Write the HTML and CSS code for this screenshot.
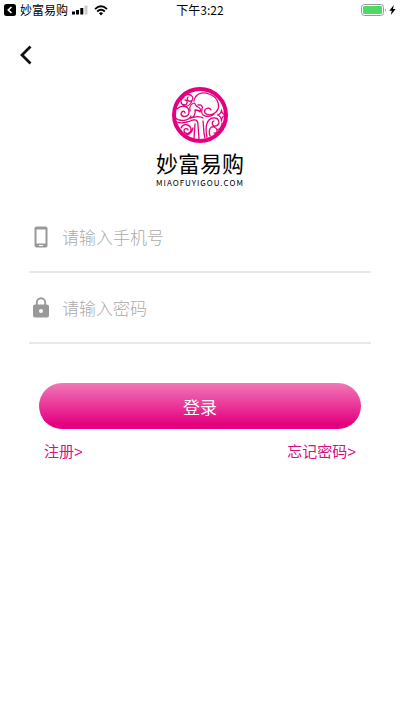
FILE: index.html
```html
<!DOCTYPE html>
<html lang="zh-CN">

<head>
    <meta charset="utf-8">
    <meta name="viewport" content="width=device-width, initial-scale=1">
    <title>妙富易购</title>
    <link rel="stylesheet" href="styles.css">
</head>

<body>
    <!-- 状态栏 -->
    <div class="status">
        <div class="status-left">
            <svg width="12" height="12" viewBox="0 0 12 12">
                <rect width="12" height="12" rx="2.5" fill="#000" />
                <path d="M7.5 3 4.3 6l3.2 3" fill="none" stroke="#fff" stroke-width="1.6" />
            </svg>
            <span>妙富易购</span>
            <svg class="signal" width="16" height="10" viewBox="0 0 16 10">
                <path d="M0 6.500h3V9.500H0zM4 5h3v4.500H4zM8.300 3h3v6.500h-3z" fill="#000" />
                <path d="M12.500 0.500h3v9h-3z" fill="#ccc" />
            </svg>
            <svg class="wifi" width="14" height="11" viewBox="0 0 14 11">
                <path d="M1 4.100Q7-1.500 13 4.100M3.200 6.500Q7 3 10.800 6.500" fill="none" stroke="#000" stroke-width="1.900" />
                <path d="M4.900 8.200Q7 6.300 9.100 8.200L7 10.500z" fill="#000" />
            </svg>
        </div>
        <div class="status-time">下午3:22</div>
        <div class="status-right">
            <svg width="26" height="12" viewBox="0 0 26 12">
                <rect x=".5" y=".5" width="22" height="11" rx="3" fill="#fff" stroke="#999" />
                <rect x="2" y="2" width="19" height="8" rx="1.500" fill="#4cd964" />
                <path d="M24 4q1.800 2 0 4z" fill="#999" />
            </svg>
            <svg width="7" height="10" viewBox="0 0 7 10">
                <path d="M4.800 0 .3 5.700h2.500L1.800 10l4.900-6H4z" fill="#000" />
            </svg>
        </div>
    </div>

    <button class="back" type="button" aria-label="返回">
        <svg width="14" height="20" viewBox="0 0 14 20">
            <path d="M11.500 1.500 3 10l8.500 8.500" fill="none" stroke="#111" stroke-width="2.800" />
        </svg>
    </button>

    <main class="login">
        <!-- logo -->
        <div class="logo">
            <svg width="56" height="56" viewBox="0 0 56 56" fill="none" stroke="#e4007f" stroke-linecap="round" stroke-linejoin="round">
                <circle cx="28" cy="28" r="26" stroke-width="4" />
                <g stroke-width="1.300">
                    <!-- 左侧卷云 -->
                    <path d="M14 8c6-2 9 4 5 6-3 1-5-2-3-4M12 10c-4 3-4 7 0 8 4 0 4-5 1-5M20 14c-2 5-6 6-9 5" />
                    <path d="M5 22c5-5 12-3 12 3 0 5-7 6-8 2 0-3 4-4 4-1M3 31c5 4 14 3 16-2" />
                    <!-- 鸟 -->
                    <path d="M18 24c-1-4 1-7 4-8 2 1 1 3 4 4 2 1 3 3 2 5-1-2-3-2-5-2 1 5-2 8-5 8M19 31c4-1 8-3 12 0" />
                    <!-- 右上祥云 -->
                    <path d="M22 14c1-7 8-10 15-7 7 2 11 9 9 15-2 5-9 8-13 4-2-4 4-7 6-3" />
                    <path d="M26 18c4-1 5 2 4 4-1 3 0 6 3 7 4 1 7 0 9-2" />
                    <path d="M49.500 23c0 3-1 4-4 5 3 1 4 3 4 6 0-3 1-5 4-6-3-1-4-2-4-5z" />
                    <!-- 下方卷纹 -->
                    <path d="M9 41c2-5 9-4 10 1 0 5-6 6-7 2 0-3 4-3 4-1M11 48c5 1 9-2 10-7" />
                    <path d="M4 35c7 2 12 0 17-2 4-1 5 2 5 5l1 14M23 37l-1 14M31 34c1 6 0 11 2 17" />
                    <path d="M35 50c-2-9-1-18 6-19 6-1 8 6 3 8-4 1-5-4-2-5M38 49c-2-7 1-10 4-9 5 2 3 7 0 6M45 43c3-1 5-4 5-7" />
                </g>
            </svg>
            <h1 class="brand">妙富易购</h1>
            <p class="domain">MIAOFUYIGOU.COM</p>
        </div>

        <form>
            <div class="field">
                <label for="phone" aria-label="手机号">
                    <svg width="24" height="24" viewBox="0 0 24 24">
                        <path fill="#999" fill-rule="evenodd" d="M7.500 1.500h9q2 0 2 2v17q0 2-2 2h-9q-2 0-2-2v-17q0-2 2-2zM7.500 4.500v14h9v-14zM10 20v1h4v-1z" />
                    </svg>
                </label>
                <input id="phone" type="tel" placeholder="请输入手机号">
            </div>
            <div class="field">
                <label for="password" aria-label="密码">
                    <svg width="24" height="24" viewBox="0 0 24 24">
                        <path d="M7.800 10V6.500a4.200 4.200 0 0 1 8.400 0V10" fill="none" stroke="#999" stroke-width="1.900" />
                        <path fill="#999" fill-rule="evenodd" d="M6 8.500h12q2 0 2 2v9q0 2-2 2H6q-2 0-2-2v-9q0-2 2-2zM12 13a2 2 0 1 0 0 4 2 2 0 0 0 0-4z" />
                    </svg>
                </label>
                <input id="password" type="password" placeholder="请输入密码">
            </div>
            <button class="submit" type="submit">登录</button>
            <div class="links">
                <a href="#register">注册&gt;</a>
                <a href="#forgot">忘记密码&gt;</a>
            </div>
        </form>
    </main>
</body>

</html>
```

FILE: styles.css
```css
* {
    box-sizing: border-box;
}

body {
    margin: 0;
    background: #fff;
    color: #000;
    font-family: "Noto Sans CJK SC", sans-serif;
}

svg {
    display: block;
    flex: none;
}

/* 状态栏 */
.status {
    display: grid;
    grid-template-columns: 1fr auto 1fr;
    align-items: center;
    height: 20px;
    padding: 0 4px;
    font-size: 12px;
    line-height: 20px;
}

.status-left,
.status-right {
    display: flex;
    align-items: center;
    gap: 4px;
}

.status-left .wifi {
    margin-left: 2px;
}

.status-right {
    justify-content: flex-end;
    gap: 2px;
}

.back {
    display: block;
    margin: 16px 0 0 12px;
    padding: 9px 7px;
    border: 0;
    background: none;
}

.login {
    padding: 0 29px;
}

/* logo */
.logo {
    display: flex;
    flex-direction: column;
    align-items: center;
    margin-top: 13px;
}

.brand {
    margin: 4px 0 0;
    font-size: 22px;
    font-weight: 400;
    line-height: 30px;
}

.domain {
    margin: 0;
    font-size: 8px;
    letter-spacing: 1px;
    line-height: 12px;
}

/* 表单 */
form {
    margin-top: 13px;
}

.field {
    display: flex;
    align-items: center;
    height: 71px;
    border-bottom: 2px solid #e8e8e8;
}

.field input {
    flex: 1;
    min-width: 0;
    margin-left: 9px;
    padding: 0;
    border: 0;
    outline: 0;
    background: none;
    font-family: inherit;
    font-size: 17px;
    font-weight: 300;
    line-height: 24px;
}

.field input::placeholder {
    color: #aaa;
}

.submit {
    display: block;
    width: calc(100% - 20px);
    height: 46px;
    margin: 39px 10px 0;
    border: 0;
    border-radius: 23px;
    background: linear-gradient(#f178b6, #e4007f 90%);
    color: #fff;
    font-family: inherit;
    font-size: 17px;
    font-weight: 400;
}

.links {
    display: flex;
    justify-content: space-between;
    margin: 11px 15px 0;
    font-family: "Liberation Sans", "Noto Sans CJK SC", sans-serif;
    font-size: 15px;
    line-height: 24px;
}

.links a {
    color: #d6107f;
    text-decoration: none;
}
```
